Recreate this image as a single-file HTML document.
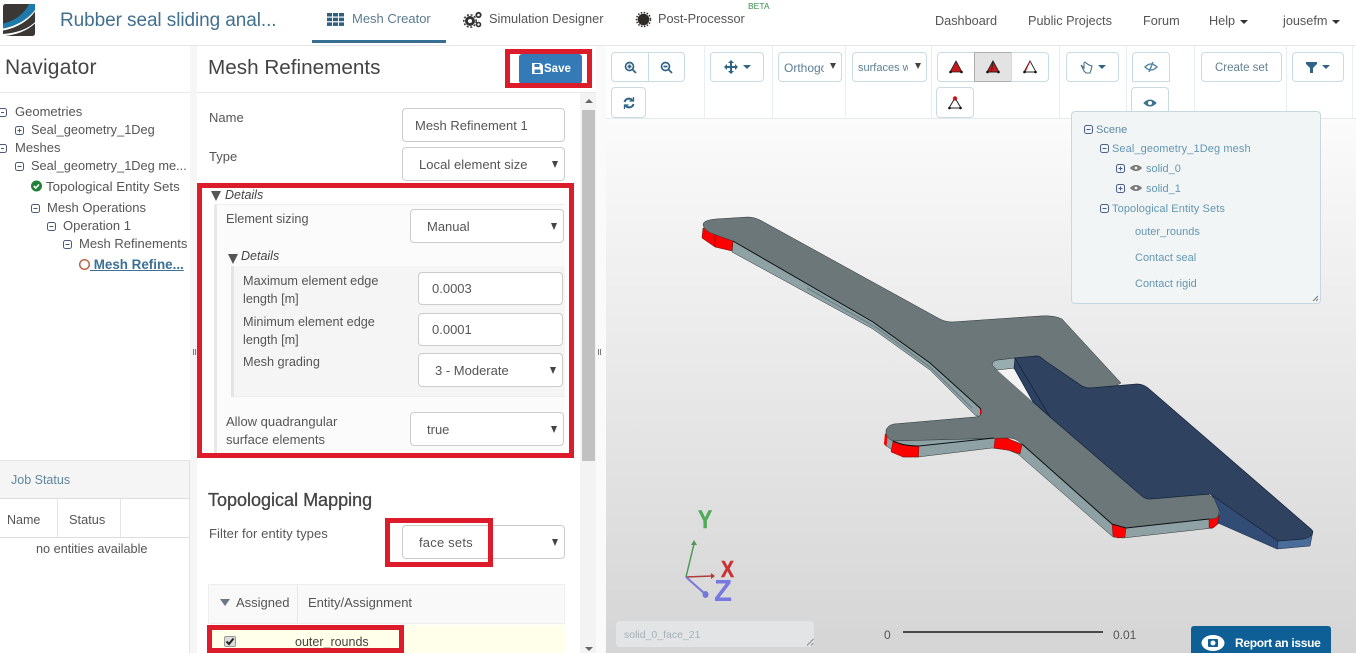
<!DOCTYPE html>
<html><head><meta charset="utf-8"><title>Mesh Refinements</title>
<style>
html,body{margin:0;padding:0}
body{width:1356px;height:653px;position:relative;overflow:hidden;background:#fff;font-family:"Liberation Sans",sans-serif;font-size:13px;color:#555}
.a{position:absolute;box-sizing:border-box}
.t{position:absolute;white-space:nowrap;line-height:16px;margin-top:1px}
.l{font-size:12.7px}
.f{position:absolute;box-sizing:border-box;background:#fff;border:1px solid #ccc;border-radius:4px;color:#555;font-size:13px;line-height:30px;white-space:nowrap}
.f:not(.i)::after{content:"";position:absolute;right:6px;top:50%;margin-top:-3px;border:3.500px solid transparent;border-top:7px solid #444;border-bottom:0}
.r{position:absolute;box-sizing:border-box;border:5px solid #dd1c2b;pointer-events:none}
.b{position:absolute;box-sizing:border-box;background:#fff;border:1px solid #c9dbe3;border-radius:4px;display:flex;align-items:center;justify-content:center;color:#5b7f95;font-size:11.5px;overflow:hidden;white-space:nowrap}
.s{position:absolute;top:46px;height:72px;width:1px;background:#e8eff2}
.tr{color:#555;font-size:13px}
.sc{color:#6497b1;font-size:11px}
.car{display:inline-block;border:4px solid transparent;border-top:4px solid currentColor;border-bottom:0;margin-left:5px;vertical-align:middle}
svg{position:absolute;overflow:visible}
</style></head><body>

<!-- header -->
<svg style="left:3px;top:4px" width="32" height="32" viewBox="0 0 32 32"><rect width="32" height="32" rx="2.500" fill="#3a3735"/><path d="M0 19.500C12 17 21 10 26 0h6v6C25 15 14 22 0 24.500z" fill="#1e7aab"/><path d="M0 24.500C14 22 25 15 32 6v1.500C25 17 14 24 0 26.500z" fill="#fff"/><path d="M0 30C12 29 24 26 32 18v1.500C24 27 12 31 2 32H0z" fill="#fff"/></svg>
<div class="t" style="left:60px;top:8px;font-size:19px;line-height:24px;color:#41708f;letter-spacing:-.08px">Rubber seal sliding anal...</div>
<svg style="left:327px;top:13px" width="17" height="13" fill="#2f5f80"><rect width="5" height="3.500"/><rect x="6" width="5" height="3.500"/><rect x="12" width="5" height="3.500"/><rect y="4.700" width="5" height="3.500"/><rect x="6" y="4.700" width="5" height="3.500"/><rect x="12" y="4.700" width="5" height="3.500"/><rect y="9.400" width="5" height="3.500"/><rect x="6" y="9.400" width="5" height="3.500"/><rect x="12" y="9.400" width="5" height="3.500"/></svg>
<div class="t" style="left:352px;top:10px;color:#5b7b90;font-size:13px">Mesh Creator</div>
<div class="a" style="left:312px;top:40px;width:134px;height:3px;background:#386f92"></div>
<svg style="left:463px;top:11px" width="20" height="18"><circle cx="7" cy="10" r="3.500" fill="none" stroke="#333" stroke-width="3"/><circle cx="7" cy="10" r="6.200" fill="none" stroke="#333" stroke-width="1.500" stroke-dasharray="2 1.700"/><circle cx="15.500" cy="4" r="2.200" fill="none" stroke="#333" stroke-width="1.800"/><circle cx="15.500" cy="13.500" r="2" fill="none" stroke="#333" stroke-width="1.600"/></svg>
<div class="t" style="left:489px;top:10px;font-size:12.800px;color:#555">Simulation Designer</div>
<svg style="left:636px;top:12px" width="15" height="15"><circle cx="7.500" cy="7.500" r="5.800" fill="#2e2a28"/><circle cx="7.500" cy="7.500" r="7" fill="none" stroke="#2e2a28" stroke-width="1.500" stroke-dasharray="1.500 1.500"/></svg>
<div class="t" style="left:658px;top:10px;font-size:12.700px;color:#555">Post-Processor</div>
<div class="t" style="left:748px;top:-1px;font-size:8.500px;line-height:12px;color:#3c8d50">BETA</div>
<div class="t" style="left:935px;top:12px;font-size:12.700px">Dashboard</div>
<div class="t" style="left:1028px;top:12px;font-size:12.700px">Public Projects</div>
<div class="t" style="left:1143px;top:12px;font-size:12.700px">Forum</div>
<div class="t" style="left:1209px;top:12px;font-size:12.700px">Help<span class="car" style="color:#333"></span></div>
<div class="t" style="left:1283px;top:12px;font-size:12.700px">jousefm<span class="car" style="color:#333"></span></div>
<div class="a" style="left:0;top:45px;width:1356px;height:1px;background:#e6e6e6"></div>

<!-- left navigator -->
<div class="a" style="left:190px;top:46px;width:7px;height:607px;background:#f6f6f6"></div>
<div class="t" style="left:5px;top:54px;font-size:21px;line-height:26px;color:#444;letter-spacing:.2px">Navigator</div>
<div class="a" style="left:0;top:92px;width:190px;height:1px;background:#e8e8e8"></div>
<div class="a" style="left:193px;top:349px;width:3px;height:6px;border-left:1px solid #777;border-right:1px solid #777"></div>

<svg style="left:0;top:0" width="200" height="280" fill="none" stroke="#4a5a78" stroke-width="1">
<rect x="-1.500" y="108.500" width="8" height="8" rx="2"/><path d="M1 112.500h3"/>
<rect x="15.500" y="126.500" width="8" height="8" rx="2"/><path d="M17.500 130.500h4M19.500 128.500v4"/>
<rect x="-1.500" y="144.500" width="8" height="8" rx="2"/><path d="M1 148.500h3"/>
<rect x="15.500" y="162.500" width="8" height="8" rx="2"/><path d="M17.500 166.500h4"/>
<rect x="31.500" y="204.500" width="8" height="8" rx="2"/><path d="M33.500 208.500h4"/>
<rect x="47.500" y="222.500" width="8" height="8" rx="2"/><path d="M49.500 226.500h4"/>
<rect x="63.500" y="240.500" width="8" height="8" rx="2"/><path d="M65.500 244.500h4"/>
<circle cx="36.500" cy="186" r="5.500" fill="#23803a" stroke="none"/><path d="M33.800 186l2 2 3.200-3.500" stroke="#fff" stroke-width="1.600"/>
<circle cx="84.500" cy="264.500" r="4.800" stroke="#b8674a" stroke-width="1.500"/>
</svg>
<div class="t tr" style="left:15px;top:103px">Geometries</div>
<div class="t tr" style="left:31px;top:121px;font-size:12.800px">Seal_geometry_1Deg</div>
<div class="t tr" style="left:15px;top:139px">Meshes</div>
<div class="t tr" style="left:31px;top:157px;font-size:12.800px">Seal_geometry_1Deg me...</div>
<div class="t tr" style="left:46px;top:178px;font-size:13.300px">Topological Entity Sets</div>
<div class="t tr" style="left:47px;top:199px">Mesh Operations</div>
<div class="t tr" style="left:63px;top:217px">Operation 1</div>
<div class="t tr" style="left:79px;top:235px">Mesh Refinements</div>
<div class="t" style="left:90px;top:256px;font-weight:bold;color:#3d7096;text-decoration:underline;font-size:13.400px;white-space:pre"> Mesh Refine...</div>

<div class="a" style="left:0;top:460px;width:190px;height:39px;background:#f5f5f5;border-top:1px solid #e2e2e2;border-right:1px solid #e2e2e2;border-bottom:1px solid #ddd"></div>
<div class="t" style="left:11px;top:471px;font-size:12.5px;color:#5f86a0">Job Status</div>
<div class="a" style="left:0;top:537px;width:190px;height:1px;background:#ddd"></div>
<div class="a" style="left:57px;top:499px;width:1px;height:38px;background:#e4e4e4"></div>
<div class="a" style="left:120px;top:499px;width:1px;height:38px;background:#e4e4e4"></div>
<div class="a" style="left:189px;top:499px;width:1px;height:154px;background:#e4e4e4"></div>
<div class="t" style="left:7px;top:511px;font-size:12.5px">Name</div>
<div class="t" style="left:69px;top:511px;font-size:12.800px">Status</div>
<div class="t" style="left:36px;top:540px;font-size:12.700px">no entities available</div>

<!-- center -->
<div class="t" style="left:208px;top:54px;font-size:20.700px;line-height:26px;color:#444">Mesh Refinements</div>
<div class="a" style="left:197px;top:92px;width:399px;height:1px;background:#e8e8e8"></div>
<div class="a" style="left:519px;top:54px;width:63px;height:30px;background:#337ab7;border-radius:3px"></div>
<svg style="left:532px;top:63px" width="11" height="11"><path d="M0 0h8.500l2.500 2.500V11H0z" fill="#fff"/><rect x="2.500" y="1" width="5" height="3" fill="#337ab7"/><rect x="2.500" y="6.500" width="6" height="3.500" fill="#337ab7"/></svg>
<div class="t" style="left:544px;top:60px;color:#fff;font-size:11.5px;font-weight:bold">Save</div>
<div class="r" style="left:505px;top:49px;width:87px;height:39px"></div>

<!-- scrollbar -->
<div class="a" style="left:580px;top:93px;width:16px;height:560px;background:#f3f3f3"></div>
<div class="a" style="left:582px;top:110px;width:13px;height:351px;background:#c1c1c1"></div>
<div class="a" style="left:585px;top:99px;border:4px solid transparent;border-bottom:4px solid #666;border-top:0"></div>
<div class="a" style="left:585px;top:647px;border:4px solid transparent;border-top:4px solid #666;border-bottom:0"></div>
<div class="a" style="left:596px;top:46px;width:10px;height:607px;background:#fafafa"></div>
<div class="a" style="left:598px;top:349px;width:3px;height:6px;border-left:1px solid #777;border-right:1px solid #777"></div>

<div class="t" style="left:209px;top:109px">Name</div>
<div class="f i" style="left:402px;top:108px;width:163px;height:34px;padding-left:12px;line-height:33px">Mesh Refinement 1</div>
<div class="t" style="left:209px;top:148px">Type</div>
<div class="f" style="left:402px;top:147px;width:163px;height:34px;padding-left:16px;line-height:33px;letter-spacing:.05px">Local element size</div>

<div class="a" style="left:214px;top:204px;width:351px;height:250px;background:#fbfbfb;border-left:3px solid #e8e8e8;border-top:1px solid #eee"></div>
<div class="a" style="left:211px;top:191px;border:5.500px solid transparent;border-top:10px solid #555;border-bottom:0"></div>
<div class="t" style="left:225px;top:186px;font-style:italic;font-size:12.5px;color:#444">Details</div>
<div class="t l" style="left:226px;top:210px">Element sizing</div>
<div class="f" style="left:410px;top:209px;width:154px;height:34px;padding-left:16px;line-height:33px">Manual</div>
<div class="a" style="left:228px;top:254px;border:5.500px solid transparent;border-top:10px solid #555;border-bottom:0"></div>
<div class="t" style="left:241px;top:247px;font-style:italic;font-size:12.5px;color:#444">Details</div>
<div class="a" style="left:231px;top:266px;width:334px;height:131px;background:#f5f5f5;border-left:3px solid #e4e4e4;border-bottom:1px solid #eee"></div>
<div class="t l" style="left:243px;top:271px;line-height:18px">Maximum element edge<br>length [m]</div>
<div class="f i" style="left:418px;top:272px;width:145px;height:33px;padding-left:13px;line-height:32px">0.0003</div>
<div class="t l" style="left:243px;top:312px;line-height:18px">Minimum element edge<br>length [m]</div>
<div class="f i" style="left:418px;top:313px;width:145px;height:33px;padding-left:13px;line-height:32px">0.0001</div>
<div class="t l" style="left:243px;top:353px">Mesh grading</div>
<div class="f" style="left:418px;top:353px;width:145px;height:34px;padding-left:16px;line-height:33px">3 - Moderate</div>
<div class="t" style="left:226px;top:412px;line-height:18px">Allow quadrangular<br>surface elements</div>
<div class="f" style="left:410px;top:412px;width:154px;height:34px;padding-left:16px;line-height:33px">true</div>
<div class="r" style="left:197px;top:183px;width:377px;height:275px"></div>

<div class="t" style="left:208px;top:488px;font-size:18px;line-height:22px;color:#444;-webkit-text-stroke:.3px #444">Topological Mapping</div>
<div class="t" style="left:209px;top:525px;letter-spacing:.08px">Filter for entity types</div>
<div class="f" style="left:402px;top:525px;width:163px;height:34px;padding-left:16px;line-height:33px;letter-spacing:.2px">face sets</div>
<div class="r" style="left:385px;top:518px;width:108px;height:49px"></div>

<div class="a" style="left:208px;top:584px;width:357px;height:40px;background:#f9f9f9;border:1px solid #eee"></div>
<div class="a" style="left:297px;top:584px;width:1px;height:40px;background:#e8e8e8"></div>
<div class="a" style="left:220px;top:599px;border:5px solid transparent;border-top:7px solid #6b7785;border-bottom:0"></div>
<div class="t" style="left:236px;top:594px">Assigned</div>
<div class="t" style="left:308px;top:594px">Entity/Assignment</div>
<div class="a" style="left:208px;top:625px;width:357px;height:28px;background:#ffffea"></div>
<div class="a" style="left:224px;top:636px;width:12px;height:11px;background:#ddd;border:1px solid #999;border-radius:2px"></div>
<svg style="left:224px;top:636px" width="12" height="11"><path d="M2.500 5.500l2.500 2.500 4.500-5.500" fill="none" stroke="#222" stroke-width="2"/></svg>
<div class="t" style="left:295px;top:633px;font-size:12.5px;color:#444">outer_rounds</div>
<div class="r" style="left:207px;top:625px;width:197px;height:28px"></div>

<!-- viewport -->
<div class="a" style="left:606px;top:118px;width:750px;height:535px;background:linear-gradient(#fbfbfb,#f1f1f1 25%,#e4e4e4 60%,#d5d5d5);border-top:1px solid #e6eaec"></div>
<svg style="left:0;top:0" width="1356" height="653">
<!-- sides gray -->
<path d="M733 241L873 322 930 363 981 409 980 417 975 415 930 370 873 329 732 252Z" fill="#8ea2a6" stroke="#2d3436" stroke-width=".5"/>
<path d="M807 288L877 328 930 367 972 408" fill="none" stroke="#6f8588" stroke-width="1.500"/>
<path d="M887 433L884 444 892 450 903 457 918 457 992 448 1008 450 1018 454 1113 537 1123 538 1213 528 1219 523 1219 512 1100 500 1022 444 1000 436 893 440Z" fill="#8ea2a6" stroke="#333" stroke-width=".5"/>
<!-- red -->
<path d="M703 228L733 240 732 251 715 247 702 238Z" fill="#f00" stroke="#5a1010" stroke-width=".5"/>
<path d="M715 234L715 247" stroke="#6a1010" stroke-width=".6"/>
<path d="M885 433L887.500 436 886.500 447 884 443.500Z" fill="#f00"/>
<path d="M893 441L903 445 919 446 918.500 457 903 457 891 452Z" fill="#f00" stroke="#5a1010" stroke-width=".4"/>
<path d="M995 438L1007 438 1022 445 1020 454 1010 450.500 994 448Z" fill="#f00" stroke="#5a1010" stroke-width=".4"/>
<path d="M1112 524L1126 528 1125 537 1118 538 1113 536Z" fill="#f00" stroke="#5a1010" stroke-width=".4"/>
<path d="M1209 519L1219 516 1219 523 1213 528 1209 528Z" fill="#f00" stroke="#5a1010" stroke-width=".4"/>
<path d="M980 408L983 412 980 416Z" fill="#d00"/>
<!-- gray top face with hole -->
<path fill-rule="evenodd" fill="#6b7778" stroke="#2b3233" stroke-width=".5" d="M703 224Q704 220 716 219L748 217Q754 217 760 220L938 318Q945 322 952 322L1040 316Q1054 315 1062 319L1121 383 1090 400 1170 470 1200 490 1214 498Q1220 505 1219 512L1218 516Q1218 519 1209 519L1126 528 1112 524 1022 444Q1015 437 1006 438L893 441Q885 438 886 430 888 425 894 424L975 417Q983 417 981 409L930 363 873 322 733 241 716 235Q703 231 703 224ZM992 365Q993 360 998 360L1015 358 1033 402 1016 368 997 370Z"/>
<path d="M733 241L873 322 930 363 981 409" fill="none" stroke="#0d1213" stroke-width="1"/>
<path d="M893 441Q903 446 919 446L994 438" fill="none" stroke="#0d1213" stroke-width="1"/>
<path d="M1022 444L1112 524 1126 528 1209 519" fill="none" stroke="#0d1213" stroke-width="1"/>
<!-- hole -->
<path d="M997 370L1015 368 1033 402Z" fill="#f3f3f3"/>
<path d="M992 365Q993 360 998 360L1015 358 1015 368 997 370Z" fill="#99adb0" stroke="#2b3233" stroke-width=".5"/>
<!-- blue sides -->
<path d="M1214 498L1220 512 1218 523 1277 549 1278 541 1210 494Z" fill="#314c75" stroke="#1a2942" stroke-width=".5"/>
<path d="M1278 541L1277 549 1310 546 1313 531 1303 539Z" fill="#4a6c99" stroke="#1a2942" stroke-width=".5"/>
<path d="M1015 358L1014 368 1033 402 1050 417Z" fill="#2c4263" stroke="#111b2c" stroke-width=".6"/>
<!-- blue top -->
<path d="M1015 358L1037 356Q1040 356 1044 360L1082 386Q1086 388 1090 388L1137 384Q1143 384 1148 388L1312 530Q1314 534 1309 537 1306 539 1303 539L1278 541 1210 494 1150 499Q1146 499 1143 497L1050 417Z" fill="#2f4260" stroke="#16233a" stroke-width=".7"/>
<!-- axes -->
<path d="M686 577L694 544" stroke="#4f9a55" stroke-width="1.500" fill="none"/><path d="M694 540l-3 5 6 0z" fill="#4f9a55"/>
<path d="M686 577L712 576" stroke="#b23a3a" stroke-width="1.500"/><path d="M715 576l-4-3v6z" fill="#b23a3a"/>
<path d="M686 577L704 593" stroke="#7777d8" stroke-width="2"/><ellipse cx="705.500" cy="594.500" rx="3" ry="3.500" fill="#7777d8"/>
</svg>
<div class="t" style="left:698px;top:506px;font-size:25px;line-height:26px;font-weight:bold;color:#4faa5a;transform:scaleX(.85);transform-origin:0 0;-webkit-text-stroke:.4px #4faa5a">Y</div>
<div class="t" style="left:721px;top:556px;font-size:23px;line-height:24px;font-weight:bold;color:#c83232;transform:scaleX(.85);transform-origin:0 0;-webkit-text-stroke:.4px #c83232">X</div>
<div class="t" style="left:714px;top:575px;font-size:31px;line-height:30px;font-weight:bold;color:#7878e0;transform:scaleX(.95);transform-origin:0 0">Z</div>

<!-- toolbar -->
<div class="s" style="left:704px"></div><div class="s" style="left:772px"></div><div class="s" style="left:845px"></div><div class="s" style="left:931px"></div><div class="s" style="left:1059px"></div><div class="s" style="left:1126px"></div><div class="s" style="left:1194px"></div><div class="s" style="left:1286px"></div><div class="s" style="left:1352px"></div>

<div class="b" style="left:611px;top:52px;width:38px;height:30px;border-radius:4px 0 0 4px"><svg style="position:static" width="13" height="13" fill="none" stroke="#2f6486" stroke-width="1.700"><circle cx="5.500" cy="5.500" r="4"/><path d="M8.500 8.500l3.500 3.500M3.500 5.500h4M5.500 3.500v4"/></svg></div>
<div class="b" style="left:648px;top:52px;width:37px;height:30px;border-radius:0 4px 4px 0"><svg style="position:static" width="13" height="13" fill="none" stroke="#2f6486" stroke-width="1.700"><circle cx="5.500" cy="5.500" r="4"/><path d="M8.500 8.500l3.500 3.500M3.500 5.500h4"/></svg></div>
<div class="b" style="left:611px;top:87px;width:35px;height:31px"><svg style="position:static" width="12" height="12" fill="none" stroke="#2f6486" stroke-width="2"><path d="M1.500 5A4.500 4.500 0 0 1 9.500 3.500M10.500 7A4.500 4.500 0 0 1 2.500 8.500"/><path d="M10.500 0v4h-4M1.500 12V8h4" stroke-width="1.300"/></svg></div>
<div class="b" style="left:710px;top:52px;width:54px;height:30px"><svg style="position:static" width="14" height="14" fill="#2f6486"><path d="M7 0l3 3H8v3h3V4l3 3-3 3V8H8v3h2l-3 3-3-3h2V8H3v2L0 7l3-3v2h3V3H4z"/></svg><span class="car" style="color:#2f6486"></span></div>
<div class="b" style="left:778px;top:52px;width:64px;height:30px;justify-content:flex-start;padding:1px 0 0 5px;font-size:12px"><span style="display:block;width:40px;overflow:hidden">Orthogonal</span><span style="position:absolute;right:5px;top:10px;border:3.500px solid transparent;border-top:6px solid #444;border-bottom:0"></span></div>
<div class="b" style="left:852px;top:52px;width:75px;height:30px;justify-content:flex-start;padding:1px 0 0 5px;font-size:11px"><span style="display:block;width:50px;overflow:hidden">surfaces with edges</span><span style="position:absolute;right:5px;top:10px;border:3.500px solid transparent;border-top:6px solid #444;border-bottom:0"></span></div>

<div class="b" style="left:937px;top:52px;width:38px;height:30px;border-radius:4px 0 0 4px"><svg style="position:static" width="14" height="14"><path d="M7 1L13 12 1 12Z" fill="#c8171c" stroke="#222" stroke-width=".8"/><circle cx="1.500" cy="12" r="1.300" fill="#111"/><circle cx="12.500" cy="12" r="1.300" fill="#111"/></svg></div>
<div class="b" style="left:974px;top:52px;width:38px;height:30px;border-radius:0;background:#e3e3e3;border-color:#adadad"><svg style="position:static" width="14" height="14"><path d="M7 1L13 12 1 12Z" fill="#c8171c" stroke="#222" stroke-width=".9"/><path d="M7 1L5.500 12" stroke="#222" stroke-width=".8"/><circle cx="1.500" cy="12" r="1.300" fill="#111"/><circle cx="12.500" cy="12" r="1.300" fill="#111"/></svg></div>
<div class="b" style="left:1011px;top:52px;width:38px;height:30px;border-radius:0 4px 4px 0"><svg style="position:static" width="14" height="14"><path d="M7 1L13 12 1 12Z" fill="#fff" stroke="#222" stroke-width=".9"/><path d="M7 1L2 12" stroke="#c8171c" stroke-width="1"/><circle cx="1.500" cy="12" r="1.300" fill="#111"/><circle cx="12.500" cy="12" r="1.300" fill="#111"/></svg></div>
<div class="b" style="left:936px;top:87px;width:38px;height:31px"><svg style="position:static" width="14" height="14"><path d="M7 2L13 12 1 12Z" fill="#fff" stroke="#222" stroke-width="1"/><circle cx="7" cy="2.500" r="2.200" fill="#c8171c"/><circle cx="1.500" cy="12" r="1.300" fill="#111"/><circle cx="12.500" cy="12" r="1.300" fill="#111"/></svg></div>
<div class="b" style="left:1066px;top:52px;width:53px;height:30px"><svg style="position:static" width="13" height="14" fill="none" stroke="#4a6f86" stroke-width="1.100"><path d="M1 5l3 3V3q1-2 2 0l3 2 3 1-1 4-1 3H6L4 11z"/></svg><span class="car" style="color:#2f6486"></span></div>
<div class="b" style="left:1132px;top:52px;width:38px;height:30px;border-radius:4px 4px 0 0"><svg style="position:static" width="14" height="12"><path d="M1 6q6-6 12 0q-6 6-12 0z" fill="none" stroke="#5c8aa6" stroke-width="1.500"/><path d="M9 1L5 11" stroke="#5c8aa6" stroke-width="1.500"/></svg></div>
<div class="b" style="left:1131px;top:87px;width:38px;height:31px"><svg style="position:static" width="14" height="10"><path d="M1 5q6-6 12 0q-6 6-12 0z" fill="#3f7291" stroke="#3f7291"/><circle cx="7" cy="5" r="2" fill="#fff"/></svg></div>
<div class="b" style="left:1201px;top:52px;width:81px;height:30px;color:#627f92;padding-top:1px">Create set</div>
<div class="b" style="left:1292px;top:52px;width:52px;height:30px"><svg style="position:static" width="11" height="11" fill="#2f6486"><path d="M0 0h11v2L7 6v5H4V6L0 2z"/></svg><span class="car" style="color:#2f6486"></span></div>

<!-- scene tree -->
<div class="a" style="left:1071px;top:111px;width:250px;height:193px;background:#f2f5f6;border:1px solid #c6d9e1;border-radius:4px"></div>
<svg style="left:0;top:0" width="1356" height="653" fill="none" stroke="#4b5f8c" stroke-width="1">
<rect x="1084.500" y="125.500" width="8" height="8" rx="2"/><path d="M1086.500 129.500h4"/>
<rect x="1100.500" y="144.500" width="8" height="8" rx="2"/><path d="M1102.500 148.500h4"/>
<rect x="1116.500" y="164.500" width="8" height="8" rx="2"/><path d="M1118.500 168.500h4M1120.500 166.500v4"/>
<rect x="1116.500" y="184.500" width="8" height="8" rx="2"/><path d="M1118.500 188.500h4M1120.500 186.500v4"/>
<rect x="1100.500" y="204.500" width="8" height="8" rx="2"/><path d="M1102.500 208.500h4"/>
<path d="M1130.500 168q5.500-5 11 0q-5.500 5-11 0z" fill="#7c7c7c" stroke="#777"/><circle cx="1136" cy="168" r="1.400" fill="#eee" stroke="none"/>
<path d="M1130.500 188q5.500-5 11 0q-5.500 5-11 0z" fill="#7c7c7c" stroke="#777"/><circle cx="1136" cy="188" r="1.400" fill="#eee" stroke="none"/>
<path d="M1318 296l-5 5M1318 299l-2 2" stroke="#777"/>
</svg>
<div class="t sc" style="left:1096px;top:121px;color:#5b8aa3">Scene</div>
<div class="t sc" style="left:1112px;top:140px;letter-spacing:.1px">Seal_geometry_1Deg mesh</div>
<div class="t sc" style="left:1146px;top:160px">solid_0</div>
<div class="t sc" style="left:1146px;top:180px">solid_1</div>
<div class="t sc" style="left:1112px;top:200px;letter-spacing:.1px">Topological Entity Sets</div>
<div class="t sc" style="left:1135px;top:223px">outer_rounds</div>
<div class="t sc" style="left:1135px;top:249px">Contact seal</div>
<div class="t sc" style="left:1135px;top:275px">Contact rigid</div>

<!-- bottom -->
<div class="a" style="left:616px;top:621px;width:198px;height:26px;background:#e2e4e5;border-radius:4px"></div>
<div class="t" style="left:624px;top:626px;font-size:10.500px;color:#a4b1b8">solid_0_face_21</div>
<svg style="left:806px;top:638px" width="8" height="8" fill="none" stroke="#888"><path d="M7.500 1L1 7.500M7.500 5L5 7.500"/></svg>
<div class="t" style="left:884px;top:626px;font-size:12px;color:#555">0</div>
<div class="a" style="left:903px;top:631px;width:200px;height:2px;background:#4a4a4a"></div>
<div class="t" style="left:1113px;top:626px;font-size:12px;color:#555">0.01</div>
<div class="a" style="left:1191px;top:626px;width:140px;height:27px;background:#0d5f96;border-radius:3px 3px 0 0"></div>
<svg style="left:1201px;top:635px" width="24" height="16"><ellipse cx="12" cy="8" rx="11.500" ry="8" fill="#fff"/><rect x="7" y="4" width="10" height="8" rx="1" fill="#0d5f96"/><circle cx="12" cy="8" r="2.500" fill="#fff"/></svg>
<div class="t" style="left:1235px;top:634px;color:#fff;font-weight:bold;font-size:12px;letter-spacing:-.3px">Report an issue</div>

</body></html>
